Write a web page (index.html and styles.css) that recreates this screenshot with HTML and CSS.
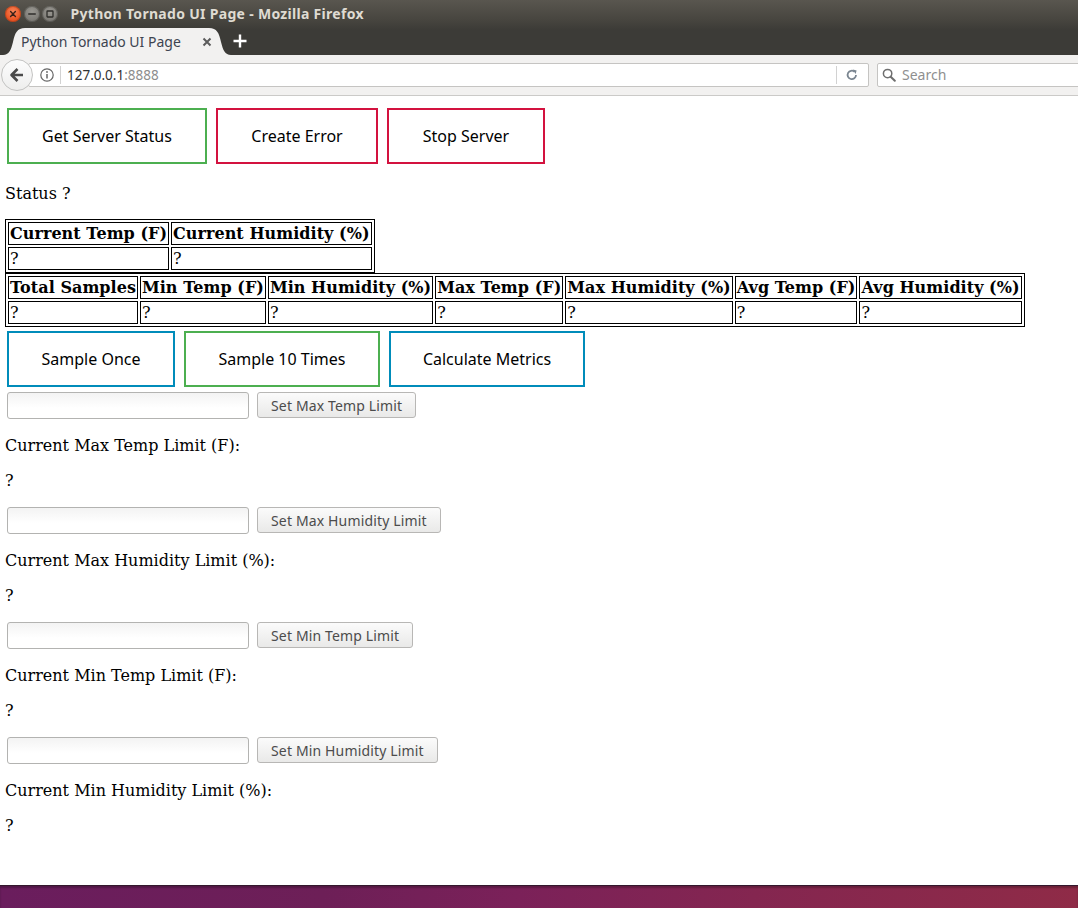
FILE: index.html
```html
<!DOCTYPE html>
<html lang="en">
<head>
<meta charset="utf-8">
<title>Python Tornado UI Page</title>
<link rel="stylesheet" href="styles.css">
</head>
<body>
<div class="screen">
  <div class="chrome-top">
    <header class="titlebar">
      <span class="wm wm-close"><svg width="16" height="16" viewBox="0 0 16 16"><path d="M5.6 5.6 L10.4 10.4 M10.4 5.6 L5.6 10.4" stroke="#3a2119" stroke-width="1.4" stroke-linecap="round"/></svg></span>
      <span class="wm wm-min"><svg width="16" height="16" viewBox="0 0 16 16"><path d="M4.8 8 H11.2" stroke="#2f2e2b" stroke-width="1.6" stroke-linecap="round"/></svg></span>
      <span class="wm wm-max"><svg width="16" height="16" viewBox="0 0 16 16"><rect x="5" y="5" width="6" height="6" rx="0.5" fill="none" stroke="#2f2e2b" stroke-width="1.3"/></svg></span>
      <span class="title">Python Tornado UI Page - Mozilla Firefox</span>
    </header>
    <div class="tabstrip">
      <div class="tab">
        <svg class="tab-bg" width="228" height="27" viewBox="0 0 228 27"><path d="M0 27 C6 27 8 22 10 14 C12 5 14 0 22 0 L206 0 C214 0 216 5 218 14 C220 22 222 27 228 27 Z" fill="#f2f1f0"/></svg>
        <span class="tab-title">Python Tornado UI Page</span>
        <span class="tab-close"><svg width="10" height="10" viewBox="0 0 10 10"><path d="M1.5 1.5 L8.5 8.5 M8.5 1.5 L1.5 8.5" stroke="#5c5c5c" stroke-width="2"/></svg></span>
      </div>
      <span class="newtab"><svg width="14" height="14" viewBox="0 0 14 14"><path d="M7 0.5 V13.5 M0.5 7 H13.5" stroke="#ffffff" stroke-width="2.4"/></svg></span>
    </div>
  </div>
  <nav class="navbar">
    <span class="back"><svg width="20" height="20" viewBox="0 0 20 20"><path d="M10.5 4 L4.5 10 L10.5 16 M4.8 10 H16" fill="none" stroke="#4b4b4b" stroke-width="2.6" stroke-linejoin="round"/></svg></span>
    <div class="urlbar">
      <span class="info"><svg width="14" height="14" viewBox="0 0 14 14"><circle cx="7" cy="7" r="6.2" fill="none" stroke="#666" stroke-width="1.2"/><circle cx="7" cy="4" r="0.9" fill="#666"/><path d="M7 6 V10.5" stroke="#666" stroke-width="1.5"/></svg></span>
      <span class="url-sep"></span>
      <span class="url-text">127.0.0.1<span class="url-port">:8888</span></span>
      <span class="url-spacer"></span>
      <span class="url-sep"></span>
      <span class="reload"><svg width="14" height="14" viewBox="0 0 14 14"><path d="M11 7 A4.2 4.2 0 1 1 9.6 3.8" fill="none" stroke="#7a8590" stroke-width="1.8"/><path d="M8 1.5 L11.6 2.4 L10.6 5.9 Z" fill="#7a8590"/></svg></span>
    </div>
    <div class="searchbar">
      <span class="mag"><svg width="14" height="14" viewBox="0 0 14 14"><circle cx="5.6" cy="5.6" r="4.2" fill="none" stroke="#6e6e6e" stroke-width="1.5"/><path d="M8.7 8.7 L12.8 12.8" stroke="#6e6e6e" stroke-width="2" stroke-linecap="round"/></svg></span>
      <span class="search-text">Search</span>
    </div>
  </nav>
  <main class="page">
    <div class="btn-row">
      <button class="btn btn-green w-200">Get Server Status</button>
      <button class="btn btn-red w-162">Create Error</button>
      <button class="btn btn-red w-158">Stop Server</button>
    </div>
    <p class="txt">Status ?</p>
    <table class="data">
      <tr><th>Current Temp (F)</th><th>Current Humidity (%)</th></tr>
      <tr><td>?</td><td>?</td></tr>
    </table>
    <table class="data">
      <tr><th>Total Samples</th><th>Min Temp (F)</th><th>Min Humidity (%)</th><th>Max Temp (F)</th><th>Max Humidity (%)</th><th>Avg Temp (F)</th><th>Avg Humidity (%)</th></tr>
      <tr><td>?</td><td>?</td><td>?</td><td>?</td><td>?</td><td>?</td><td>?</td></tr>
    </table>
    <div class="btn-row">
      <button class="btn btn-blue w-168">Sample Once</button>
      <button class="btn btn-green w-196">Sample 10 Times</button>
      <button class="btn btn-blue w-196">Calculate Metrics</button>
    </div>
    <div class="limit-row"><input class="field" type="text"><button class="set-btn">Set Max Temp Limit</button></div>
    <p class="txt">Current Max Temp Limit (F):</p>
    <p class="txt">?</p>
    <div class="limit-row"><input class="field" type="text"><button class="set-btn">Set Max Humidity Limit</button></div>
    <p class="txt">Current Max Humidity Limit (%):</p>
    <p class="txt">?</p>
    <div class="limit-row"><input class="field" type="text"><button class="set-btn">Set Min Temp Limit</button></div>
    <p class="txt">Current Min Temp Limit (F):</p>
    <p class="txt">?</p>
    <div class="limit-row"><input class="field" type="text"><button class="set-btn">Set Min Humidity Limit</button></div>
    <p class="txt">Current Min Humidity Limit (%):</p>
    <p class="txt">?</p>
  </main>
  <div class="desktop"></div>
</div>
</body>
</html>
```
FILE: styles.css
```css
* { box-sizing: border-box; }
html, body { margin: 0; padding: 0; }
body {
  width: 1078px;
  height: 908px;
  overflow: hidden;
  font-family: "DejaVu Serif", serif;
  background: #fff;
}
.screen {
  display: flex;
  flex-direction: column;
  height: 908px;
}

/* window title + tabs */
.chrome-top {
  background: linear-gradient(#59564f 0px, #47453f 20px, #3c3b37 30px, #3c3b37 55px);
  height: 55px;
}
.titlebar {
  height: 27px;
  display: flex;
  align-items: center;
  padding-left: 5px;
}
.wm {
  width: 16px;
  height: 16px;
  border-radius: 50%;
  display: flex;
  margin-right: 2.5px;
}
.wm-close {
  background: radial-gradient(circle at 50% 35%, #f6855a 0, #ec5a2a 55%, #d8441b 100%);
  box-shadow: inset 0 0 0 1px rgba(120, 40, 10, 0.35);
}
.wm-min, .wm-max {
  background: radial-gradient(circle at 50% 35%, #9a9892 0, #807e79 60%, #6c6a65 100%);
  box-shadow: inset 0 0 0 1px rgba(40, 40, 35, 0.35);
}
.title {
  margin-left: 10px;
  color: #dfdbd2;
  font-family: "Noto Sans", "Open Sans", sans-serif;
  font-weight: bold;
  font-size: 14px;
  letter-spacing: 0.3px;
}
.tabstrip {
  height: 28px;
  display: flex;
  align-items: flex-end;
}
.tab {
  position: relative;
  width: 228px;
  height: 27px;
  margin-left: 3px;
  display: flex;
  align-items: center;
  font-family: "Noto Sans", "Open Sans", sans-serif;
  font-size: 14px;
  color: #3d4450;
}
.tab-bg {
  position: absolute;
  left: 0;
  top: 0;
}
.tab-title {
  position: relative;
  margin-left: 18px;
  flex: 1;
}
.tab-close {
  position: relative;
  display: flex;
  margin-right: 19px;
}
.newtab {
  display: flex;
  margin-left: 2px;
  margin-bottom: 7px;
}

/* navigation bar */
.navbar {
  position: relative;
  height: 41px;
  background: #f2f1f0;
  border-bottom: 1px solid #cbcac8;
  display: flex;
  align-items: center;
  padding-left: 28px;
  padding-bottom: 1px;
  overflow: hidden;
  font-family: "Noto Sans", "Open Sans", sans-serif;
}
.back {
  position: absolute;
  left: 1px;
  top: 4px;
  width: 32px;
  height: 32px;
  border-radius: 50%;
  border: 1px solid #c3c3c2;
  background: linear-gradient(#fdfdfd, #eeeeed);
  display: flex;
  align-items: center;
  justify-content: center;
  z-index: 2;
}
.urlbar {
  width: 841px;
  height: 24px;
  flex-shrink: 0;
  background: #fff;
  border: 1px solid #c5c4c2;
  border-radius: 2px;
  display: flex;
  align-items: center;
  padding-left: 11px;
}
.info { display: flex; }
.url-sep {
  width: 1px;
  height: 18px;
  background: #d2d2d2;
  margin-left: 6px;
}
.url-text {
  margin-left: 6px;
  font-size: 13.5px;
  color: #333;
}
.url-port { color: #8d8d8d; }
.url-spacer { flex: 1; }
.reload {
  display: flex;
  margin: 0 9px 0 8px;
}
.searchbar {
  margin-left: 8px;
  width: 220px;
  height: 24px;
  background: #fff;
  border: 1px solid #c5c4c2;
  border-radius: 2px;
  display: flex;
  align-items: center;
  padding-left: 4px;
  flex-shrink: 0;
}
.mag { display: flex; }
.search-text {
  margin-left: 6px;
  font-size: 14px;
  color: #8f8f8f;
}

/* page */
.page {
  flex: 1;
  overflow: hidden;
  background: #fff;
  padding: 8px 8px 0 5px;
  font-family: "DejaVu Serif", serif;
  font-size: 16px;
  color: #000;
}
.btn-row {
  display: flex;
  gap: 5px;
}
.btn {
  height: 56px;
  margin: 4px 2px;
  padding: 0;
  background: #fff;
  border: 2px solid;
  color: #000;
  font-family: "Noto Sans", "Open Sans", sans-serif;
  font-size: 16px;
  text-align: center;
}
.btn-green { border-color: #4caf50; }
.btn-red { border-color: #d3123f; }
.btn-blue { border-color: #008cba; }
.w-200 { width: 200px; }
.w-162 { width: 162px; }
.w-158 { width: 158px; }
.w-168 { width: 168px; }
.w-196 { width: 196px; }

.txt {
  margin: 16px 0;
  line-height: 19px;
}
.data {
  border: 1px solid #000;
  border-spacing: 2px;
  font-family: "DejaVu Serif", serif;
  font-size: 16px;
  line-height: 19px;
}
.data th, .data td {
  border: 1px solid #000;
  padding: 1px;
  text-align: left;
}
.data th { font-weight: bold; letter-spacing: 0.04px; }

.limit-row {
  display: flex;
  gap: 8px;
  height: 29px;
  padding: 1px 0 0 2px;
}
.field {
  width: 242px;
  height: 27px;
  margin: 0;
  border: 1px solid #b3b3b1;
  border-radius: 3px;
  background: linear-gradient(#f3f3f3, #ffffff 60%);
}
.set-btn {
  height: 26px;
  margin: 0;
  padding: 0 13px;
  border: 1px solid #b8b7b5;
  border-radius: 3px;
  background: linear-gradient(#fbfbfb, #e9e9e8);
  color: #4c4c4c;
  font-family: "Noto Sans", "Open Sans", sans-serif;
  font-size: 14px;
  letter-spacing: 0.15px;
}

/* desktop strip */
.desktop {
  height: 23px;
  border-top: 1px solid #33182d;
  background: linear-gradient(90deg, #6a1d5d 0%, #6d1f57 30%, #7b2159 48%, #842650 70%, #8f2b47 100%);
  box-shadow: inset 0 2px 2px rgba(0, 0, 0, 0.25);
}
```
